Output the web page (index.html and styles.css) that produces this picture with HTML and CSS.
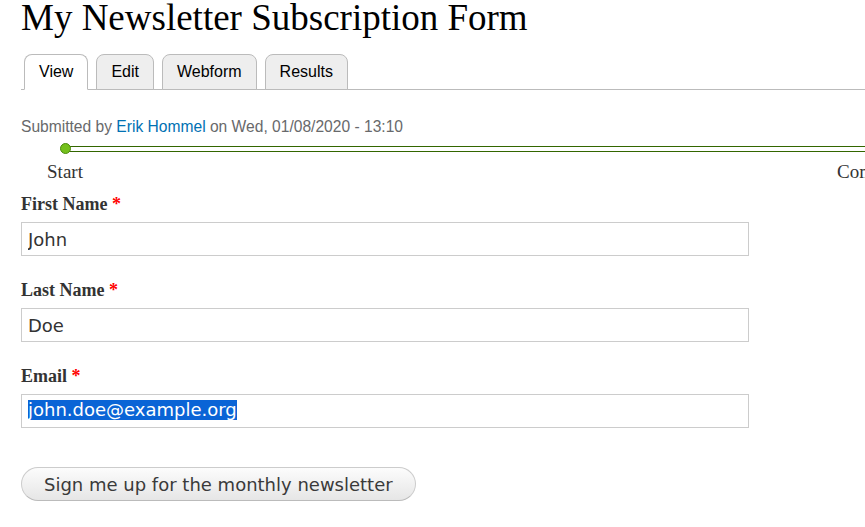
FILE: index.html
```
<!DOCTYPE html>
<html>
<head>
	<title>My Newsletter Subscription Form</title>
	<meta charset="utf-8">
	<link rel="stylesheet" href="styles.css">
</head>
<body>
  <div class="page">
  	<h1 class="title">My Newsletter Subscription Form</h1>
  	<ul class="tabs">
  		<li class="active"><a href="#">View</a></li>
  		<li><a href="#">Edit</a></li>
  		<li><a href="#">Webform</a></li>
  		<li><a href="#">Results</a></li>
  	</ul>
  	<div class="submitted">Submitted by <a href="#">Erik Hommel</a> on Wed, 01/08/2020 - 13:10</div>
  	<div class="progressbar">
  		<div class="progressbar-outer">
  			<span class="progressbar-page current"></span>
  			<span class="progressbar-page last"></span>
  		</div>
  		<div class="progressbar-labels">
  			<span>Start</span>
  			<span>Complete</span>
  		</div>
  	</div>
  	<form action="" class="webform">
  		<div class="form-item">
  			<label>First Name <span class="required">*</span></label>
  			<input type="text" class="form-text" value="John">
  		</div>
  		<div class="form-item">
  			<label>Last Name <span class="required">*</span></label>
  			<input type="text" class="form-text" value="Doe">
  		</div>
  		<div class="form-item">
  			<label>Email <span class="required">*</span></label>
  			<div class="form-text"><span class="selected">john.doe@example.org</span></div>
  		</div>
  		<div class="form-actions">
  			<button type="button" class="form-submit">Sign me up for the monthly newsletter</button>
  		</div>
  	</form>
  </div>
</body>
</html>
```

FILE: styles.css
```
html, body {
	margin: 0;
	overflow: hidden;
	background: #fff;
}
.page {
	padding-left: 21px;
	width: 1000px;
}
.title {
	margin: 0;
	font-family: "Liberation Serif", serif;
	font-weight: normal;
	font-size: 37px;
	line-height: 36px;
	color: #000;
}
.tabs {
	display: flex;
	gap: 8px;
	margin: 18px 0 0 0;
	padding: 0 0 0 3px;
	list-style: none;
	border-bottom: 1px solid #bbb;
	width: 900px;
}
.tabs li {
	margin-bottom: -1px;
}
.tabs a {
	display: block;
	height: 34px;
	padding: 0 14px;
	line-height: 34px;
	font-family: "Liberation Sans", Arial, sans-serif;
	font-size: 16px;
	color: #000;
	text-decoration: none;
	background: #eee;
	border: 1px solid #bbb;
	border-radius: 8px 8px 0 0;
}
.tabs li.active a {
	background: #fff;
	border-bottom-color: #fff;
}
.submitted {
	margin-top: 28px;
	font-family: "Liberation Sans", Arial, sans-serif;
	font-size: 15.6px;
	line-height: 18px;
	color: #68696b;
}
.submitted a {
	color: #0071b3;
	text-decoration: none;
}
.progressbar {
	margin: 10px 0 0 44px;
	width: 809px;
}
.progressbar-outer {
	position: relative;
	height: 4px;
	border-top: 1px solid #336600;
	border-bottom: 1px solid #336600;
}
.progressbar-page {
	position: absolute;
	top: -4px;
	width: 9px;
	height: 9px;
	border: 1px solid #4b8a0c;
	border-radius: 50%;
	background: #74c01c;
}
.progressbar-page.current {
	left: -5px;
}
.progressbar-page.last {
	right: -5px;
	background: #fff;
}
.progressbar-labels {
	display: flex;
	justify-content: space-between;
	margin: 8px -50px 0 -50px;
	font-family: "Liberation Serif", serif;
	font-size: 19px;
	line-height: 24px;
	color: #333;
}
.progressbar-labels span {
	width: 100px;
	text-align: center;
}
.webform {
	margin-top: 8px;
}
.form-item {
	margin-bottom: 22px;
}
.form-item label {
	display: block;
	margin-bottom: 6px;
	font-family: "Liberation Serif", serif;
	font-weight: bold;
	font-size: 18px;
	line-height: 24px;
	color: #333;
}
.required {
	color: #f00;
}
.form-text {
	display: block;
	box-sizing: border-box;
	width: 728px;
	height: 34px;
	margin: 0;
	padding: 0 6px;
	border: 1px solid #ccc;
	font-family: "DejaVu Sans", sans-serif;
	font-size: 18px;
	line-height: 32px;
	color: #333;
	background: #fff;
	outline: none;
}
.selected {
	background: #0a64d6;
	color: #fff;
	line-height: 20px;
	display: inline-block;
	vertical-align: middle;
	margin-top: -5px;
}
.form-actions {
	margin-top: 39px;
}
.form-submit {
	box-sizing: border-box;
	height: 34px;
	padding: 0 22px;
	border: 1px solid #ccc;
	border-bottom-color: #bbb;
	border-radius: 17px;
	background: linear-gradient(#fcfcfc, #e6e6e6);
	font-family: "DejaVu Sans", sans-serif;
	font-size: 18px;
	color: #3a3a3a;
}
```
